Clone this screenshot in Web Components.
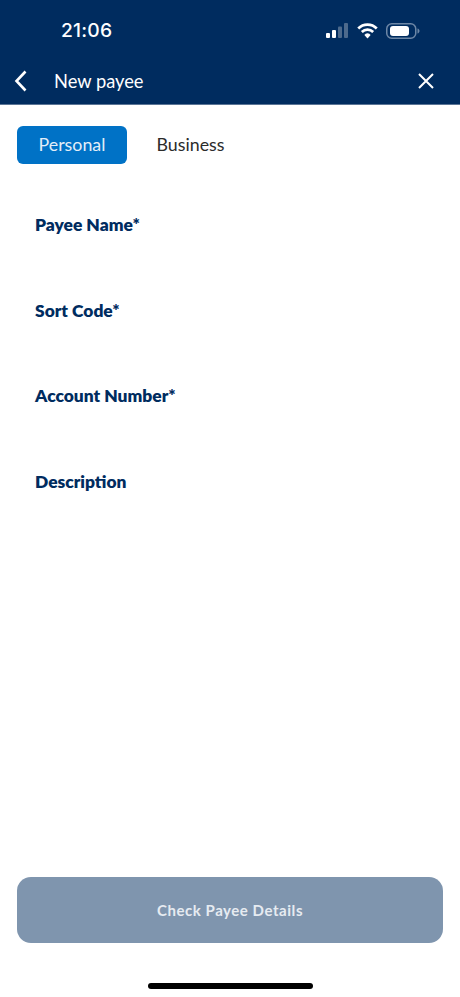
<!DOCTYPE html>
<html>
<head>
<meta charset="utf-8">
<title>New payee</title>
<style>
  html, body { margin: 0; padding: 0; background: #fff; }
  body { width: 460px; height: 997px; overflow: hidden; font-family: Lato, sans-serif; }
</style>
</head>
<body>
<payee-screen>
  <app-header slot="header" title="New payee" time="21:06"></app-header>
  <payee-tabs slot="tabs"></payee-tabs>
  <payee-field slot="fields">Payee Name*</payee-field>
  <payee-field slot="fields">Sort Code*</payee-field>
  <payee-field slot="fields">Account Number*</payee-field>
  <payee-field slot="fields">Description</payee-field>
  <check-button slot="action">Check Payee Details</check-button>
</payee-screen>

<script>
class AppHeader extends HTMLElement {
  constructor() {
    super();
    this.attachShadow({ mode: 'open' });
    this.shadowRoot.innerHTML = `
      <style>
        :host { display: block; background: #002c5f; color: #fff; height: 104px; border-bottom: 1px solid #5b7596; box-sizing: content-box; }
        .status { height: 60px; display: flex; align-items: center; justify-content: space-between; padding: 2px 40px 0 61px; box-sizing: border-box; }
        .time { font: 500 19.3px/1 Inter, "Noto Sans", sans-serif; letter-spacing: 0.2px; }
        .icons { display: flex; align-items: center; gap: 8px; }
        .nav { height: 42px; display: flex; align-items: center; padding: 0 26px 0 14px; }
        .title { font: 400 18.3px/1 Lato, sans-serif; margin-left: 26px; flex: 1; }
        svg { display: block; }
      </style>
      <div class="status">
        <span class="time">${this.getAttribute('time')}</span>
        <span class="icons">
          <svg width="24" height="16" viewBox="0 0 24 16">
            <rect x="1" y="10" width="4" height="5" rx="1" fill="#fff"/>
            <rect x="7" y="7" width="4" height="8" rx="1" fill="#fff"/>
            <rect x="13" y="3.5" width="4" height="11.5" rx="1" fill="#4d6a8c"/>
            <rect x="19" y="0" width="4" height="15" rx="1" fill="#4d6a8c"/>
          </svg>
          <svg width="21" height="16" viewBox="0 0 20 15">
            <path d="M1.2 5.2a12.4 12.4 0 0 1 17.6 0" fill="none" stroke="#fff" stroke-width="2.6"/>
            <path d="M4.6 8.4a7.8 7.8 0 0 1 10.8 0" fill="none" stroke="#fff" stroke-width="2.6"/>
            <path d="M7 11.2a3.6 3.6 0 0 1 6 0L10 14.6z" fill="#fff"/>
          </svg>
          <svg width="34" height="16" viewBox="0 0 34 16">
            <rect x="0.75" y="0.75" width="29" height="14.5" rx="5" fill="none" stroke="#6d87a6" stroke-width="1.5"/>
            <rect x="4" y="3" width="19" height="10" rx="3" fill="#fff"/>
            <path d="M31.5 5.5c1.2.3 2 1.3 2 2.5s-.8 2.2-2 2.5z" fill="#6d87a6"/>
          </svg>
        </span>
      </div>
      <div class="nav">
        <svg width="14" height="22" viewBox="0 0 14 22"><path d="M11.5 1.5 2.5 11l9 9.5" fill="none" stroke="#fff" stroke-width="2.6"/></svg>
        <span class="title">${this.getAttribute('title')}</span>
        <svg width="16" height="16" viewBox="0 0 16 16"><path d="M1 1l14 14M15 1 1 15" fill="none" stroke="#fff" stroke-width="2"/></svg>
      </div>`;
  }
}

class PayeeTabs extends HTMLElement {
  constructor() {
    super();
    this.attachShadow({ mode: 'open' });
    this.shadowRoot.innerHTML = `
      <style>
        :host { display: flex; padding: 21px 17px 0; font: 400 17.8px/1 Lato, sans-serif; }
        .tab { height: 38px; width: 110px; display: flex; align-items: center; justify-content: center; border-radius: 6px; }
        .active { background: #0072c6; color: #e3eef8; }
        .other { color: #2b2b2b; width: 127px; }
      </style>
      <div class="tab active">Personal</div>
      <div class="tab other">Business</div>`;
  }
}

class PayeeField extends HTMLElement {
  constructor() {
    super();
    this.attachShadow({ mode: 'open' });
    this.shadowRoot.innerHTML = `
      <style>
        :host { display: block; height: 85.6px; padding-left: 35px; color: #002c5f; font: 800 17.4px/22px Lato, sans-serif; }
      </style>
      <slot></slot>`;
  }
}

class CheckButton extends HTMLElement {
  constructor() {
    super();
    this.attachShadow({ mode: 'open' });
    this.shadowRoot.innerHTML = `
      <style>
        :host { display: flex; align-items: center; justify-content: center; height: 66px; border-radius: 14px; background: #7f95ae; color: #e6ebf1; font: 700 15px/1 Lato, sans-serif; letter-spacing: 0.55px; }
      </style>
      <slot></slot>`;
  }
}

class PayeeScreen extends HTMLElement {
  constructor() {
    super();
    this.attachShadow({ mode: 'open' });
    this.shadowRoot.innerHTML = `
      <style>
        :host { display: flex; flex-direction: column; width: 460px; height: 997px; background: #fff; }
        .fields { flex: 1; padding-top: 50px; }
        .action { padding: 0 17px; }
        .home { height: 54px; display: flex; justify-content: center; padding-top: 40px; box-sizing: border-box; }
        .bar { width: 165px; height: 6px; border-radius: 3px; background: #000; }
      </style>
      <slot name="header"></slot>
      <slot name="tabs"></slot>
      <div class="fields"><slot name="fields"></slot></div>
      <div class="action"><slot name="action"></slot></div>
      <div class="home"><div class="bar"></div></div>`;
  }
}

customElements.define('app-header', AppHeader);
customElements.define('payee-tabs', PayeeTabs);
customElements.define('payee-field', PayeeField);
customElements.define('check-button', CheckButton);
customElements.define('payee-screen', PayeeScreen);
</script>
</body>
</html>
